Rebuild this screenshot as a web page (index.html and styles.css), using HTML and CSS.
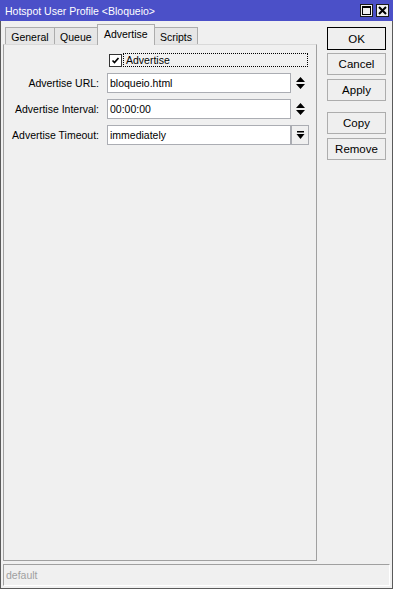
FILE: index.html
```html
<!DOCTYPE html>
<html>
<head>
<meta charset="utf-8">
<link rel="stylesheet" href="styles.css">
</head>
<body>
<div class="window">
  <div class="titlebar">
    <span class="title">Hotspot User Profile &lt;Bloqueio&gt;</span>
    <div class="tb-btns">
      <span class="tb-btn"><svg width="11" height="11" viewBox="0 0 11 11"><rect x="1.5" y="1.5" width="8" height="8" fill="none" stroke="#000" stroke-width="1"/><rect x="1" y="1" width="9" height="2" fill="#000"/></svg></span>
      <span class="tb-btn"><svg width="11" height="11" viewBox="0 0 11 11"><path d="M2 2 L9 9 M9 2 L2 9" stroke="#000" stroke-width="2"/></svg></span>
    </div>
  </div>
  <div class="content">
    <div class="main">
      <div class="tabs">
        <div class="tab">General</div>
        <div class="tab">Queue</div>
        <div class="tab active">Advertise</div>
        <div class="tab">Scripts</div>
      </div>
      <div class="panel">
        <div class="form">
          <div class="cb-row">
            <span class="checkbox"><svg width="11" height="11" viewBox="0 0 11 11"><path d="M2.5 5.5 L4.5 7.5 L8.5 3" fill="none" stroke="#000" stroke-width="1.7"/></svg></span>
            <span class="cb-label">Advertise</span>
          </div>
          <label class="lbl">Advertise URL:</label>
          <div class="field">bloqueio.html</div>
          <div class="aux"><svg width="9" height="12" viewBox="0 0 9 12"><path d="M4.5 0 L9 5 L0 5 Z M0 7 L9 7 L4.5 12 Z" fill="#000"/></svg></div>
          <label class="lbl">Advertise Interval:</label>
          <div class="field">00:00:00</div>
          <div class="aux"><svg width="9" height="12" viewBox="0 0 9 12"><path d="M4.5 0 L9 5 L0 5 Z M0 7 L9 7 L4.5 12 Z" fill="#000"/></svg></div>
          <label class="lbl">Advertise Timeout:</label>
          <div class="field">immediately</div>
          <div class="aux"><span class="dd"><svg width="9" height="9" viewBox="0 0 9 9"><rect x="1" y="0" width="7" height="1.5" fill="#000"/><path d="M0.5 3 L8.5 3 L4.5 8 Z" fill="#000"/></svg></span></div>
        </div>
      </div>
    </div>
    <div class="side">
      <button class="btn default">OK</button>
      <button class="btn">Cancel</button>
      <button class="btn">Apply</button>
      <button class="btn gap">Copy</button>
      <button class="btn">Remove</button>
    </div>
  </div>
  <div class="status">default</div>
</div>
</body>
</html>
```

FILE: styles.css
```css
html, body {
  margin: 0;
  padding: 0;
  background: #ffffff;
}
body {
  font-family: "Liberation Sans", Arial, sans-serif;
  font-size: 10.5px;
  color: #000;
  width: 396px;
  height: 590px;
  overflow: hidden;
}
.window {
  width: 391px;
  height: 588px;
  background: #f0f0f0;
  border: 1px solid #5a5a5a;
  border-top: none;
  display: flex;
  flex-direction: column;
}
.titlebar {
  height: 21px;
  flex: none;
  background: #4b50c8;
  display: flex;
  align-items: center;
  justify-content: space-between;
  padding: 0 4px 0 5px;
  margin-left: -1px;
  margin-right: -1px;
}
.title {
  color: #fff;
  font-size: 10.5px;
  padding-top: 1px;
}
.tb-btns {
  display: flex;
  gap: 3px;
}
.tb-btn {
  width: 13px;
  height: 13px;
  background: #f0f0f0;
  border: 1px solid #1a1a1a;
  box-sizing: border-box;
  display: flex;
  align-items: center;
  justify-content: center;
}
.content {
  flex: 1;
  display: flex;
  padding-left: 2px;
  min-height: 0;
}
.main {
  width: 314px;
  display: flex;
  flex-direction: column;
  padding-top: 3px;
}
.tabs {
  display: flex;
  align-items: flex-end;
  padding-left: 2px;
  height: 21px;
}
.tab {
  height: 18px;
  box-sizing: border-box;
  border: 1px solid #acacac;
  border-bottom: none;
  background: #e6e6e6;
  padding: 2px 5.25px 0 5.25px;
  margin-right: -1px;
  line-height: 15px;
}
.tab.active {
  height: 21px;
  background: #f0f0f0;
  padding-top: 2px;
  position: relative;
  z-index: 1;
  padding-left: 6px;
  padding-right: 6px;
}
.panel {
  flex: 1;
  border: 1px solid #a0a0a0;
  border-top: 1px solid #d9d9d9;
  margin-top: -1px;
  background: #f0f0f0;
  padding-top: 8px;
}
.form {
  display: grid;
  grid-template-columns: 95px 192px 18px;
  column-gap: 0;
  row-gap: 6px;
  align-items: center;
}
.cb-row {
  grid-column: 2 / 4;
  display: flex;
  align-items: center;
  gap: 1px;
  margin-left: 8px;
  height: 14px;
}
.checkbox {
  width: 13px;
  height: 13px;
  box-sizing: border-box;
  border: 1px solid #333;
  background: #fff;
  display: flex;
  align-items: center;
  justify-content: center;
  margin-left: 2px;
}
.cb-label {
  flex: 1;
  height: 14px;
  box-sizing: border-box;
  border: 1px dotted #000;
  padding-left: 2px;
  line-height: 12px;
  margin-right: 1px;
}
.lbl {
  text-align: right;
}
.field {
  height: 20px;
  box-sizing: border-box;
  border: 1px solid #abadb3;
  background: #fff;
  margin-left: 8px;
  padding-left: 2px;
  line-height: 18px;
}
.aux {
  display: flex;
  align-items: center;
  justify-content: center;
  height: 20px;
}
.dd {
  width: 18px;
  height: 20px;
  box-sizing: border-box;
  border: 1px solid #abadb3;
  background: #f0f0f0;
  display: flex;
  align-items: center;
  justify-content: center;
}
.side {
  display: flex;
  flex-direction: column;
  gap: 4px;
  padding-left: 10px;
  padding-top: 6px;
}
.btn {
  width: 59px;
  height: 22px;
  box-sizing: border-box;
  border: 1px solid #adadad;
  background: #efefef;
  font-family: "Liberation Sans", Arial, sans-serif;
  font-size: 11.5px;
  color: #000;
  padding: 0;
  margin: 0;
}
.btn.default {
  border: 1px solid #000;
  height: 23px;
  margin-bottom: -1px;
}
.btn.gap {
  margin-top: 7px;
}
.status {
  height: 20px;
  flex: none;
  margin: 3px 2px 2px 2px;
  border-top: 1px solid #a0a0a0;
  border-left: 1px solid #a0a0a0;
  border-right: 1px solid #ffffff;
  border-bottom: 1px solid #ffffff;
  color: #a0a0a0;
  padding-left: 2px;
  line-height: 20px;
}
```
